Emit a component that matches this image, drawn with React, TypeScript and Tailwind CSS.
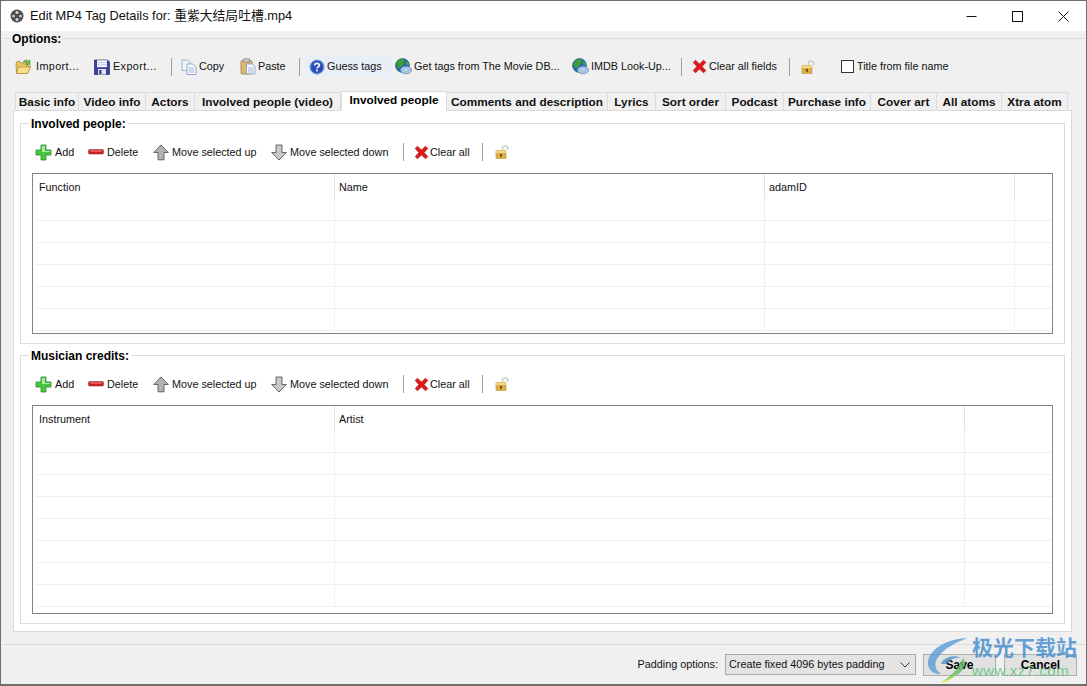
import React from "react";

const font = { fontFamily: '"Liberation Sans","Noto Sans CJK SC",sans-serif' };

function Folder() {
  return (
    <svg width="17" height="17" viewBox="0 0 17 17">
      <path d="M1 5.5 L1.5 15.5 H12.5 L15.5 8 H12.5 V5 H6 L5 3.5 H2 Z" fill="#e9c45c" stroke="#a9863a" strokeWidth="0.8" />
      <path d="M3.5 9 H15.5 L12.5 15.5 H1.5 Z" fill="#f8e08c" stroke="#b8923e" strokeWidth="0.8" />
      <path d="M8 4 C10 1.5 12 1.5 13.5 3 L15 1.8 V6.5 H10.5 L12 5 C11 4 9.5 3.8 8 4 Z" fill="#6fbf4a" stroke="#3c8a2c" strokeWidth="0.5" />
    </svg>
  );
}
function Floppy() {
  return (
    <svg width="16" height="16" viewBox="0 0 16 16">
      <path d="M0.5 1 H13.5 L15.5 3 V15.5 H0.5 Z" fill="#3a3f9c" stroke="#23266e" strokeWidth="0.7" />
      <rect x="3" y="1.2" width="10" height="7" fill="#eef0fa" />
      <rect x="3" y="3" width="10" height="0.8" fill="#c6cbe6" />
      <rect x="3" y="5" width="10" height="0.8" fill="#c6cbe6" />
      <rect x="4" y="10" width="8" height="5.5" fill="#e2e3ee" />
      <rect x="5.2" y="11" width="2.2" height="4" fill="#34387e" />
    </svg>
  );
}
function CopyIcon() {
  return (
    <svg width="16" height="16" viewBox="0 0 16 16">
      <path d="M1 1 H6.5 L9 3.5 V11.5 H1 Z" fill="#eef3fb" stroke="#8fa3c6" strokeWidth="0.8" />
      <path d="M6 5 H11.5 L15 8 V15.5 H6 Z" fill="#f8fbff" stroke="#7f96bd" strokeWidth="0.8" />
      <path d="M7.5 9 H13 M7.5 11 H13 M7.5 13 H13" stroke="#8ba6d0" strokeWidth="0.8" />
    </svg>
  );
}
function PasteIcon() {
  return (
    <svg width="16" height="17" viewBox="0 0 16 17">
      <rect x="1" y="2.5" width="11" height="13.5" rx="1" fill="#dcb976" stroke="#9a7b45" strokeWidth="0.8" />
      <rect x="3.5" y="0.8" width="6" height="3.4" rx="0.6" fill="#c9cdd6" stroke="#777" strokeWidth="0.7" />
      <path d="M6.5 6 H12 L15 8.5 V16 H6.5 Z" fill="#f7f9fd" stroke="#8398bc" strokeWidth="0.8" />
      <path d="M8 10 H13.5 M8 12 H13.5 M8 14 H13.5" stroke="#8ba6d0" strokeWidth="0.8" />
    </svg>
  );
}
function Question() {
  return (
    <svg width="16" height="16" viewBox="0 0 16 16">
      <circle cx="8" cy="8" r="7.2" fill="#2f5fc8" stroke="#a8b8d8" strokeWidth="1" />
      <circle cx="8" cy="8" r="5.8" fill="#2a50b8" />
      <path d="M5.6 6.3 C5.8 3.8 10.4 3.8 10.4 6.2 C10.4 7.9 8 7.8 8 9.6" fill="none" stroke="#fff" strokeWidth="1.7" />
      <rect x="7.1" y="10.6" width="1.8" height="1.8" fill="#fff" />
    </svg>
  );
}
function Globe() {
  return (
    <svg width="17" height="17" viewBox="0 0 17 17">
      <circle cx="7.5" cy="7.5" r="7" fill="#1f6aa8" stroke="#2a5f86" strokeWidth="0.6" />
      <path d="M3 2.8 C5 1 8 0.8 9.5 2 C10.5 4 8.5 5 8 7 C6 8 5 10 3.8 10.5 C2 8.5 1 5 3 2.8 Z" fill="#3f9e32" />
      <path d="M10.5 3.5 L13.5 4.5 L14 7 L11.5 6.5 Z" fill="#4fa83a" />
      <ellipse cx="11" cy="12" rx="5.5" ry="3.8" fill="#a9c7e6" stroke="#5f7fa8" strokeWidth="0.7" />
      <ellipse cx="11" cy="11.5" rx="2" ry="1.2" fill="#e8f2fb" stroke="#6f8fb8" strokeWidth="0.5" />
    </svg>
  );
}
function RedX() {
  return (
    <svg width="15" height="15" viewBox="0 0 15 15">
      <path d="M1.2 3.4 L3.4 1.2 L7.5 4.9 L11.6 1.2 L13.8 3.4 L10.1 7.5 L13.8 11.6 L11.6 13.8 L7.5 10.1 L3.4 13.8 L1.2 11.6 L4.9 7.5 Z" fill="#e01818" stroke="#a01010" strokeWidth="0.6" strokeLinejoin="round" />
    </svg>
  );
}
function Lock() {
  return (
    <svg width="15" height="16" viewBox="0 0 15 16">
      <path d="M7.5 6 V4 C7.5 1.2 12.8 1.2 12.8 4 V6" fill="none" stroke="#c8c8c8" strokeWidth="1.5" />
      <rect x="1" y="6.5" width="10" height="8" rx="0.6" fill="#dcb040" stroke="#b89238" strokeWidth="0.6" />
      <rect x="1" y="6.5" width="10" height="2.5" fill="#f0d888" />
      <rect x="5.1" y="10" width="1.8" height="2.8" fill="#5a4412" />
    </svg>
  );
}
function Plus() {
  return (
    <svg width="17" height="17" viewBox="0 0 17 17">
      <path d="M6 1 H11 V6 H16 V11 H11 V16 H6 V11 H1 V6 H6 Z" fill="#46c83e" stroke="#34803a" strokeWidth="0.8" />
      <path d="M7 2 H10 V7 H15 V8 H7 Z" fill="#a8ec98" />
    </svg>
  );
}
function Minus() {
  return (
    <svg width="16" height="16" viewBox="0 0 16 16">
      <rect x="0.5" y="5.5" width="15" height="4.5" rx="1.2" fill="#d21c22" stroke="#97363a" strokeWidth="0.6" />
      <rect x="2" y="6.4" width="12" height="1.1" fill="#ef8a88" />
    </svg>
  );
}
function UpArrow() {
  return (
    <svg width="16" height="17" viewBox="0 0 16 17">
      <path d="M8 1 L15.3 8.5 H11 V15.8 H5 V8.5 H0.7 Z" fill="#b4b4b4" stroke="#5a5a5a" strokeWidth="0.9" strokeLinejoin="round" />
    </svg>
  );
}
function DownArrow() {
  return (
    <svg width="16" height="17" viewBox="0 0 16 17">
      <path d="M5 1 H11 V8.5 H15.3 L8 16 L0.7 8.5 H5 Z" fill="#c8c8c8" stroke="#5a5a5a" strokeWidth="0.9" strokeLinejoin="round" />
    </svg>
  );
}
function Reel() {
  return (
    <svg width="14" height="14" viewBox="0 0 14 14">
      <circle cx="7" cy="7" r="6.5" fill="#4a4a4a" />
      <circle cx="7" cy="3.5" r="1.6" fill="#d8d8d8" />
      <circle cx="7" cy="10.5" r="1.6" fill="#d8d8d8" />
      <circle cx="3.5" cy="7" r="1.6" fill="#c0c0c0" />
      <circle cx="10.5" cy="7" r="1.6" fill="#c0c0c0" />
    </svg>
  );
}

function Tool({ icon, label, className }: { icon: React.ReactNode; label: string; className: string }) {
  return (
    <div className={`flex items-center h-full shrink-0 ${className}`}>
      {icon}
      <span className="whitespace-nowrap">{label}</span>
    </div>
  );
}

function Sep({ className }: { className: string }) {
  return (
    <div className={`flex items-center h-full shrink-0 ${className}`}>
      <div className="w-px h-[18px] bg-[#a0a0a0]" />
    </div>
  );
}

function IconBox({ children, className }: { children: React.ReactNode; className: string }) {
  return <span className={`flex items-center justify-start shrink-0 ${className}`}>{children}</span>;
}

const tabs: [string, string][] = [
  ["Basic info", "w-[64px]"],
  ["Video info", "w-[67px]"],
  ["Actors", "w-[49px]"],
  ["Involved people (video)", "w-[146px]"],
  ["Involved people", "w-[106px]"],
  ["Comments and description", "w-[161px]"],
  ["Lyrics", "w-[48px]"],
  ["Sort order", "w-[70px]"],
  ["Podcast", "w-[58px]"],
  ["Purchase info", "w-[87px]"],
  ["Cover art", "w-[66px]"],
  ["All atoms", "w-[65px]"],
  ["Xtra atom", "w-[66px]"],
];

function GroupToolbar() {
  return (
    <div className="flex items-center h-[24px] pl-[14px] text-[10.8px] text-[#111]">
      <Tool className="w-[53px]" icon={<IconBox className="w-[20px]"><Plus /></IconBox>} label="Add" />
      <Tool className="w-[65px]" icon={<IconBox className="w-[19px]"><Minus /></IconBox>} label="Delete" />
      <Tool className="w-[118px]" icon={<IconBox className="w-[19px]"><UpArrow /></IconBox>} label="Move selected up" />
      <Tool className="w-[132px]" icon={<IconBox className="w-[19px]"><DownArrow /></IconBox>} label="Move selected down" />
      <Sep className="w-[11px]" />
      <Tool className="w-[68px]" icon={<IconBox className="w-[16px]"><RedX /></IconBox>} label="Clear all" />
      <Sep className="w-[13px]" />
      <Lock />
    </div>
  );
}

function Table({ cols, rows }: { cols: [string, string][]; rows: number }) {
  return (
    <div className="mx-[11px] border border-[#82828c] bg-white overflow-hidden pl-[3px] flex-1">
      <div className="flex h-[25px]">
        {cols.map(([c, w], i) => (
          <div
            key={c}
            className={`${w} h-full flex items-center pt-[2px] border-r border-[#e4e4e4] text-[10.8px] text-[#111] shrink-0 ${i === 0 ? "pl-[3px]" : "pl-[4px]"}`}
          >
            {c}
          </div>
        ))}
        <div className="flex-1" />
      </div>
      {Array.from({ length: rows }).map((_, i) => (
        <div key={i} className="flex h-[22px] border-b border-[#efefef]">
          {cols.map(([c, w]) => (
            <div key={c} className={`${w} border-r border-[#efefef] shrink-0`} />
          ))}
          <div className="flex-1" />
        </div>
      ))}
    </div>
  );
}

function Group({ title, children, className }: { title: string; children: React.ReactNode; className: string }) {
  return (
    <div className={`border border-[#dcdcdc] flex flex-col ${className}`}>
      <div className="-mt-[7px] ml-[8px] w-fit bg-white px-[2px] font-bold text-[12px] leading-[14px] text-black">{title}</div>
      {children}
    </div>
  );
}

export default function App() {
  return (
    <div style={font} className="w-[1087px] h-[686px] overflow-hidden relative flex flex-col bg-[#f0f0f0] border border-[#6e6e6e] border-b-2">
      {/* Title bar */}
      <div className="h-[30px] bg-white flex items-center shrink-0 pl-[9px]">
        <Reel />
        <span className="ml-[6px] text-[12.8px] text-[#111] whitespace-nowrap">Edit MP4 Tag Details for: 重紫大结局吐槽.mp4</span>
        <div className="ml-auto flex items-center h-full text-black">
          <div className="w-[46px] flex justify-center">
            <svg width="11" height="11" viewBox="0 0 11 11"><path d="M0.5 5.5 H10.5" stroke="#111" strokeWidth="1" /></svg>
          </div>
          <div className="w-[46px] flex justify-center">
            <svg width="11" height="11" viewBox="0 0 11 11"><rect x="0.5" y="0.5" width="10" height="10" fill="none" stroke="#111" strokeWidth="1" /></svg>
          </div>
          <div className="w-[46px] flex justify-center">
            <svg width="11" height="11" viewBox="0 0 11 11"><path d="M0.5 0.5 L10.5 10.5 M10.5 0.5 L0.5 10.5" stroke="#111" strokeWidth="1" /></svg>
          </div>
        </div>
      </div>

      {/* Options group */}
      <div className="flex-1 min-h-0 mt-[7px] mx-[1px] border-t border-[#dcdcdc] flex flex-col">
        <div className="-mt-[7px] ml-[8px] w-fit bg-[#f0f0f0] px-[2px] font-bold text-[12px] leading-[14px] text-black">Options:</div>

        <div className="flex items-center h-[21px] mt-[10px] pl-[13px] text-[10.8px] text-[#111]">
          <Tool className="w-[79px] tracking-[0.4px]" icon={<IconBox className="w-[21px]"><Folder /></IconBox>} label="Import..." />
          <Tool className="w-[77px] tracking-[0.4px]" icon={<IconBox className="w-[19px]"><Floppy /></IconBox>} label="Export..." />
          <Sep className="w-[10px]" />
          <Tool className="w-[59px]" icon={<IconBox className="w-[18px]"><CopyIcon /></IconBox>} label="Copy" />
          <Tool className="w-[59px]" icon={<IconBox className="w-[18px]"><PasteIcon /></IconBox>} label="Paste" />
          <Sep className="w-[6px]" />
          <Tool className="w-[87px] bg-[#e8eff7] pl-[4px] mr-[3px]" icon={<IconBox className="w-[18px]"><Question /></IconBox>} label="Guess tags" />
          <Tool className="w-[177px]" icon={<IconBox className="w-[19px]"><Globe /></IconBox>} label="Get tags from The Movie DB..." />
          <Tool className="w-[109px]" icon={<IconBox className="w-[19px]"><Globe /></IconBox>} label="IMDB Look-Up..." />
          <Sep className="w-[11px]" />
          <Tool className="w-[97px]" icon={<IconBox className="w-[17px]"><RedX /></IconBox>} label="Clear all fields" />
          <Sep className="w-[12px]" />
          <div className="w-[40px] shrink-0"><Lock /></div>
          <div className="w-[13px] h-[13px] border border-[#333] bg-white shrink-0 mr-[3px]" />
          <span className="whitespace-nowrap">Title from file name</span>
        </div>

        {/* Tabs */}
        <div className="flex items-end h-[20px] mt-[13px] pl-[13px] relative z-10">
          {tabs.map(([t, w]) => {
            const active = t === "Involved people";
            return (
              <div
                key={t}
                className={`${w} shrink-0 flex items-center justify-center font-bold text-[11.8px] whitespace-nowrap border-t border-r border-[#dcdcdc] ${
                  active
                    ? "h-[20px] bg-white text-black border-l -mb-px pb-[1px]"
                    : "h-[18px] bg-[#f0f0f0] text-[#111] first:border-l pt-[2px]"
                }`}
              >
                {t}
              </div>
            );
          })}
        </div>

        {/* Tab page */}
        <div className="ml-[11px] mr-[13px] h-[522px] bg-white border border-[#d9d9d9] px-[6px] pt-[12px] flex flex-col gap-[11px] shrink-0">
          <Group title="Involved people:" className="h-[221px]">
            <div className="mt-[9px]"><GroupToolbar /></div>
            <div className="mt-[9px] mb-[9px] flex-1 min-h-0 flex">
              <Table rows={6} cols={[["Function", "w-[299px]"], ["Name", "w-[430px]"], ["adamID", "w-[250px]"]]} />
            </div>
          </Group>
          <Group title="Musician credits:" className="h-[269px]">
            <div className="mt-[9px]"><GroupToolbar /></div>
            <div className="mt-[9px] mb-[9px] flex-1 min-h-0 flex">
              <Table rows={8} cols={[["Instrument", "w-[299px]"], ["Artist", "w-[630px]"]]} />
            </div>
          </Group>
        </div>

        {/* Bottom */}
        <div className="mt-[12px] border-t border-[#dcdcdc] flex-1 flex items-start justify-end pt-[9px] pr-[8px] text-[10.8px] text-[#111]">
          <span className="mr-[7px] h-[21px] flex items-center">Padding options:</span>
          <div className="w-[191px] h-[21px] border border-[#a8a8a8] bg-[#e4e4e4] flex items-center pl-[3px] pr-[5px] justify-between">
            <span>Create fixed 4096 bytes padding</span>
            <svg width="10" height="6" viewBox="0 0 10 6"><path d="M0.5 0.5 L5 5 L9.5 0.5" fill="none" stroke="#333" strokeWidth="1" /></svg>
          </div>
          <div className="ml-[7px] w-[73px] h-[22px] border border-[#adadad] bg-[#e1e1e1] flex items-center justify-center font-bold text-[12px] text-black">Save</div>
          <div className="ml-[8px] w-[73px] h-[22px] border border-[#adadad] bg-[#e1e1e1] flex items-center justify-center font-bold text-[12px] text-black">Cancel</div>
        </div>
      </div>

      {/* Watermark overlay */}
      <div className="absolute left-[926px] top-[636px] w-[160px] h-[50px] pointer-events-none">
        <svg className="absolute left-0 top-0" width="50" height="48" viewBox="0 0 50 48">
          <path d="M40 1 C22 2 4 10 1 24 C0 32 6 38 14 37 C8 33 6 26 12 19 C18 11 28 6 40 1 Z" fill="#5b9bd5" opacity="0.8" />
          <path d="M14 27 C16 20 28 17 34 21 C28 20 22 23 20 27 Z" fill="#4f8fcb" opacity="0.8" />
          <path d="M36 21 C42 28 34 40 16 44 C26 38 32 30 36 21 Z" fill="#63bb63" opacity="0.8" />
          <path d="M16 44 C22 42 26 40 30 36 C26 42 20 46 12 46 Z" fill="#e8e05a" opacity="0.8" />
        </svg>
        <div className="absolute left-[45px] top-[-3px] text-[21px] leading-[24px] font-bold text-[#4a90cf]/85 whitespace-nowrap" style={{ fontFamily: '"Noto Sans CJK SC",sans-serif' }}>极光下载站</div>
        <div className="absolute left-[45px] top-[25px] text-[15px] leading-[18px] text-[#5fc27a]/85 whitespace-nowrap tracking-[0.5px]" style={{ fontFamily: '"Liberation Sans",sans-serif' }}>www.xz7.com</div>
      </div>
    </div>
  );
}
